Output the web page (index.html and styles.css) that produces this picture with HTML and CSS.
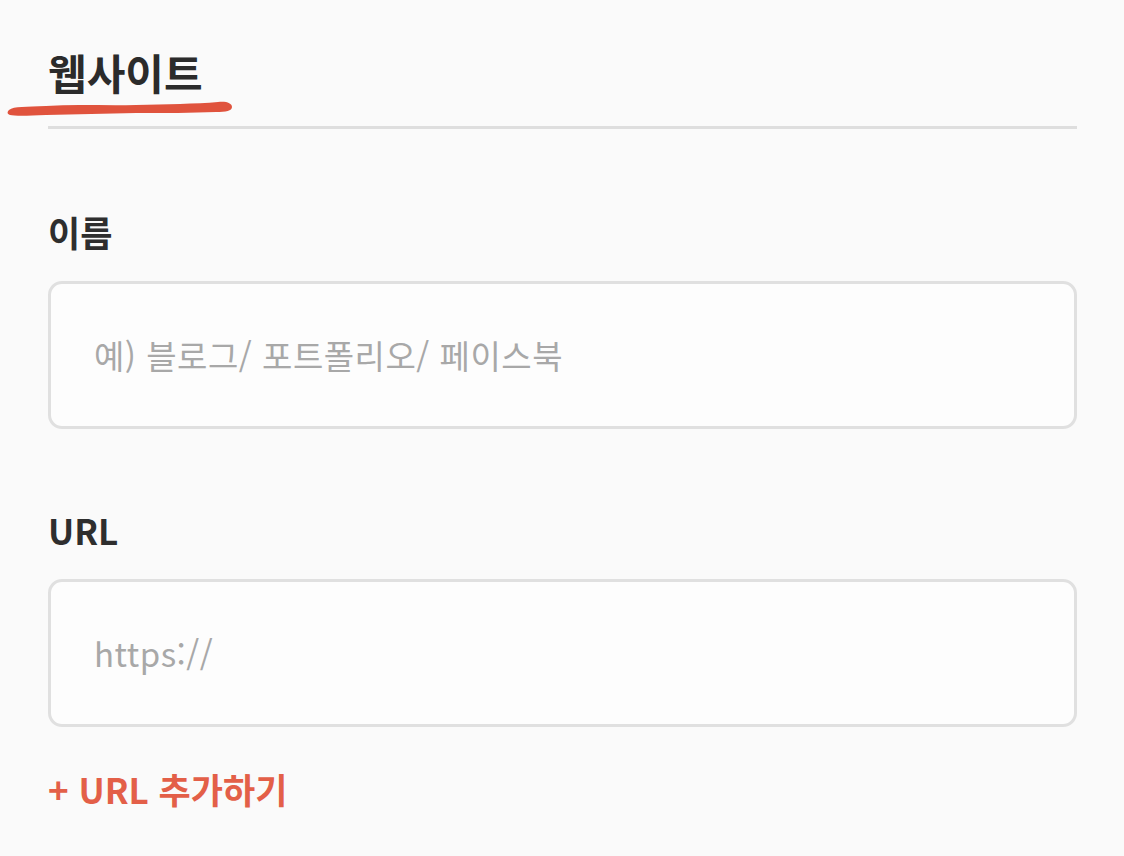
FILE: index.html
```html
<!DOCTYPE html>
<html lang="ko">
<head>
  <meta charset="UTF-8">
  <title>웹사이트</title>
  <link rel="stylesheet" href="styles.css">
</head>
<body>
  <div class="section-head">
    <h2 class="title">웹사이트</h2>
    <svg class="brush" width="230" height="20" viewBox="0 0 230 20">
      <path d="M3 10 C 8 6, 20 7, 40 6 C 70 4, 100 6, 130 5 C 160 4, 190 4, 212 2 C 220 1, 226 3, 226 7 C 226 11, 220 12, 210 12 C 185 13, 160 13, 130 13 C 100 14, 70 14, 40 15 C 20 16, 8 16, 4 15 C 1 14, 1 12, 3 10 Z" fill="#e0533d"/>
    </svg>
  </div>

  <div class="field">
    <label class="field-label">이름</label>
    <div class="input"><span class="placeholder">예) 블로그/ 포트폴리오/ 페이스북</span></div>
  </div>

  <div class="field">
    <label class="field-label">URL</label>
    <div class="input"><span class="placeholder">https://</span></div>
  </div>

  <div class="add-link">+ URL 추가하기</div>
</body>
</html>
```

FILE: styles.css
```css
body {
  margin: 0;
  padding: 0 47px 0 48px;
  background-color: #fafafa;
  font-family: "Noto Sans CJK KR", "Noto Sans", sans-serif;
  color: #2e2e2e;
}

.section-head {
  position: relative;
  padding-top: 42px;
  border-bottom: 3px solid #dedede;
  height: 84px;
}

.title {
  margin: 0;
  font-size: 42px;
  font-weight: 700;
  line-height: 60px;
  color: #2b2b2b;
}

.brush {
  position: absolute;
  left: -42px;
  top: 100px;
}

.field {
  margin-top: 82px;
}

.field + .field {
  margin-top: 80px;
}

.field-label {
  display: block;
  font-size: 35px;
  font-weight: 700;
  line-height: 42px;
  color: #2e2e2e;
}

.input {
  margin-top: 28px;
  height: 142px;
  border: 3px solid #e0e0e0;
  border-radius: 14px;
  background-color: #fdfdfd;
  display: flex;
  align-items: center;
  padding-left: 43px;
}

.placeholder {
  font-size: 33px;
  letter-spacing: 0.5px;
  color: #a8a8a8;
}

.add-link {
  margin-top: 36px;
  font-size: 35px;
  font-weight: 700;
  color: #e35f48;
}
```
